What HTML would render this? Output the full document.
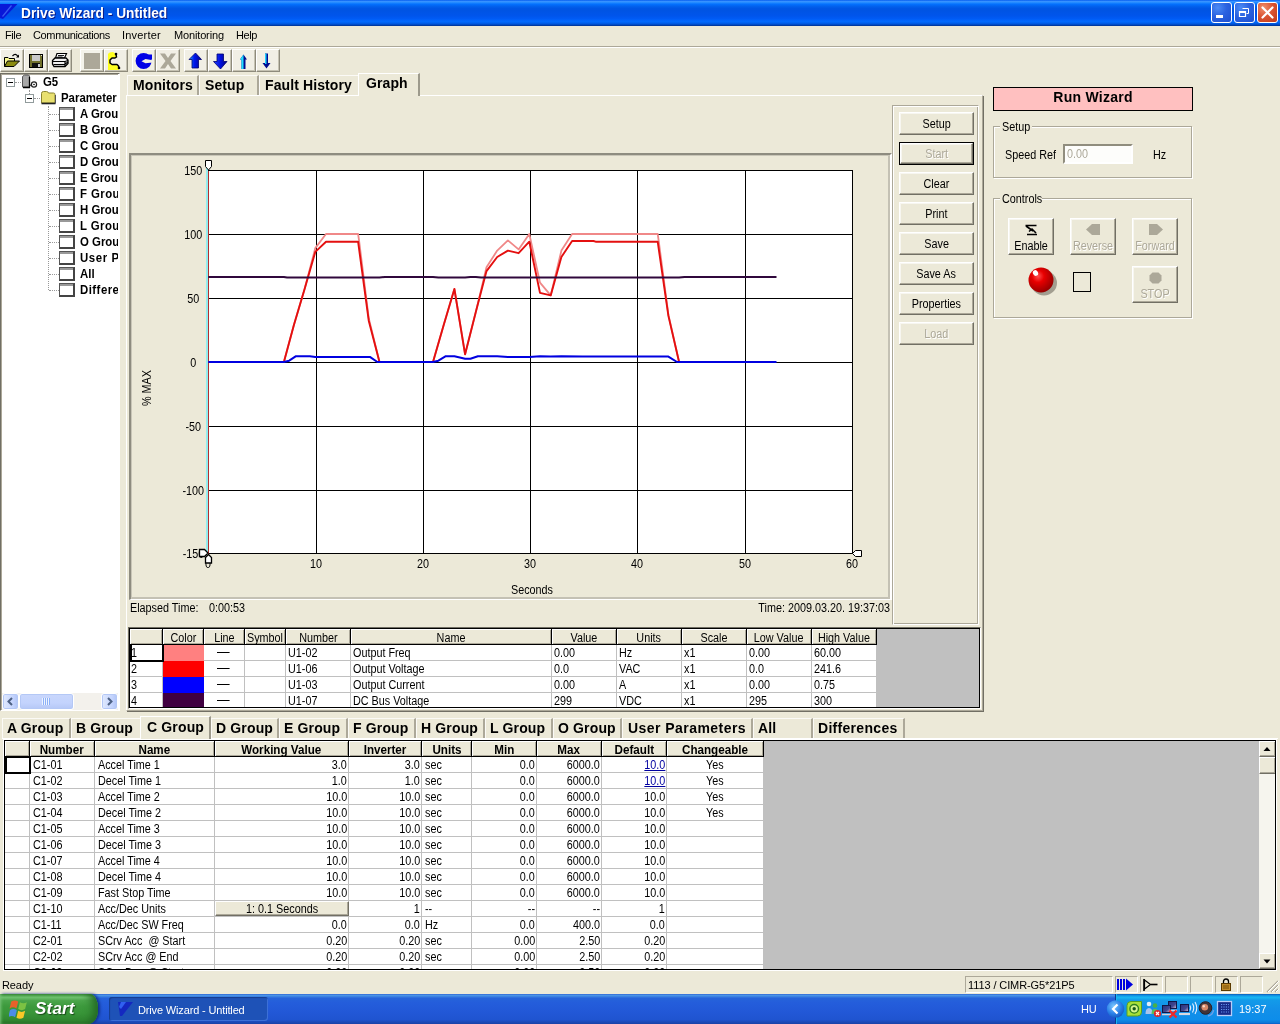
<!DOCTYPE html>
<html>
<head>
<meta charset="utf-8">
<title>Drive Wizard - Untitled</title>
<style>
html,body{margin:0;padding:0}
body{will-change:transform;width:1280px;height:1024px;position:relative;overflow:hidden;background:#ECE9D8;font:11px "Liberation Sans",sans-serif;color:#000}
.a{position:absolute;box-sizing:border-box}
.t{position:absolute;white-space:nowrap;line-height:1;letter-spacing:-.2px}
.b{font-weight:bold}
.m{font-size:12px;letter-spacing:0;transform:scaleX(.9);transform-origin:0 0}
.mr{transform-origin:100% 0}
.mc{transform-origin:50% 0}
.s{display:inline-block;transform:scaleX(.9);transform-origin:0 50%}
.sr{transform-origin:100% 50%}
.sc{transform-origin:50% 50%}
.sb{transform:scaleX(.97)}
#title{left:0;top:0;width:1280px;height:26px;background:linear-gradient(to bottom,#0058EE 0%,#3A93FF 5%,#288EFF 9%,#127DFF 13%,#036FFC 17%,#0262EE 24%,#0057E5 32%,#0054E3 40%,#0055EB 60%,#005BF5 72%,#026AFE 82%,#0062EF 88%,#0052D6 93%,#0040AB 97%,#003092 100%)}
.cb{top:2px;width:21px;height:21px;border:1px solid #fff;border-radius:3px;background:radial-gradient(circle at 30% 25%,#4B8BF5 0%,#2B62E0 45%,#1D4FD0 100%)}
.btn{border:1px solid;border-color:#fff #716F64 #716F64 #fff;box-shadow:inset -1px -1px 0 #ACA899,inset 1px 1px 0 #F7F6F0;background:#ECE9D8;text-align:center;line-height:21px;padding-top:1px;font-size:12px}
.dis{color:#ACA899;text-shadow:1px 1px 0 #fff}
.sunk{border:1px solid;border-color:#ACA899 #fff #fff #ACA899}
.tb{top:49px;width:24px;height:23px;background:#F1EFE5;border:1px solid;border-color:#fff #8E8B7C #8E8B7C #fff;box-shadow:inset -1px -1px 0 #C5C2B2}
.tab{position:absolute;box-sizing:border-box;font:bold 14px "Liberation Sans",sans-serif;white-space:nowrap;border-top:1px solid #FBFAF6;border-left:1px solid #FBFAF6;border-right:2px solid #ACA899;line-height:18px;padding-left:5px;letter-spacing:.1px}
.tabs{border:none;background:#ECE9D8;border-top:1px solid #fff;border-left:1px solid #fff;border-right:2px solid #9D9A8C}
.tr{position:absolute;white-space:nowrap;font-weight:bold;font-size:12px;line-height:1;transform:scaleX(.95);transform-origin:0 0}
.hd{position:absolute;box-sizing:border-box;background:#ECE9D8;border-right:1px solid #000;border-bottom:1px solid #000;box-shadow:inset 1px 1px 0 #fff,inset -1px -1px 0 #ACA899;text-align:center;white-space:nowrap;overflow:hidden;font-size:12px}
.c{position:absolute;box-sizing:border-box;white-space:nowrap;overflow:hidden;border-right:1px solid #C0C0C0;border-bottom:1px solid #C0C0C0;background:#fff;font-size:12px}
</style>
</head>
<body>
<div id="title" class="a"></div>
<svg class="a" style="left:0;top:0" width="22" height="26"><polygon points="0,4 17.500,4 3,19 0,18" fill="#0818D8"/><path d="M2.500 16.500l9-11" stroke="#3A5CF0" stroke-width="1.200"/></svg>
<div class="t b" style="left:21px;top:6px;font-size:14px;color:#fff;text-shadow:1px 1px 0 #0A1883;letter-spacing:0;transform:scaleX(.98);transform-origin:0 0">Drive Wizard - Untitled</div>
<div class="a cb" style="left:1211px"><div class="a" style="left:4px;top:12px;width:7px;height:3px;background:#fff"></div></div>
<div class="a cb" style="left:1234px"><svg class="a" style="left:0;top:0" width="19" height="19"><path d="M7.500 5.500h6v5h-2" fill="none" stroke="#fff" stroke-width="1"/><path d="M4.500 8.500h6v5h-6z M4.500 9.500h6" fill="none" stroke="#fff" stroke-width="1.200"/></svg></div>
<div class="a cb" style="left:1257px;background:radial-gradient(circle at 30% 25%,#F0906C 0%,#DB5533 45%,#C03A1A 100%)"><svg class="a" style="left:0;top:0" width="19" height="19"><path d="M4.500 4.500l10 10M14.500 4.500l-10 10" stroke="#fff" stroke-width="2.200" stroke-linecap="round"/></svg></div>

<div class="t" style="left:5px;top:30px;letter-spacing:-0.4px">File</div>
<div class="t" style="left:33px;top:30px;letter-spacing:-0.35px">Communications</div>
<div class="t" style="left:122px;top:30px;letter-spacing:0.2px">Inverter</div>
<div class="t" style="left:174px;top:30px;letter-spacing:-0.15px">Monitoring</div>
<div class="t" style="left:236px;top:30px;letter-spacing:-0.4px">Help</div>
<div class="a" style="left:0;top:46px;width:1280px;height:1px;background:#ACA899"></div><div class="a" style="left:0;top:47px;width:1280px;height:1px;background:#fff"></div>
<div class="a tb" style="left:0px"><svg class="a" style="left:0;top:0" width="21" height="20"><g transform="translate(-1,-50)"><path d="M4.500 66.500v-9h3.500l1 1h5.500v3" fill="#FFFF99" stroke="#000" stroke-width="1"/><path d="M5 58.500h2.500l1 1.500h5.500v1h-7.500l-1.500 3z" fill="#F8F890"/><path d="M4.500 66.500l3-5.500h12l-5.500 5.500z" fill="#8B8B10" stroke="#000" stroke-width="1"/><path d="M12.500 56q3-3.500 5.500 0.500" fill="none" stroke="#000" stroke-width="1.200"/><path d="M16 57.500h3v-3z" fill="#000"/></g></svg></div>
<div class="a tb" style="left:24px"><svg class="a" style="left:0;top:0" width="21" height="20"><g transform="translate(-25,-50)"><rect x="29.500" y="54.500" width="13" height="13" fill="#70702C" stroke="#000" stroke-width="1"/><rect x="32" y="55" width="8" height="6" fill="#C8C8C8"/><rect x="32" y="63" width="8" height="4" fill="#111"/><rect x="38" y="64" width="2" height="3" fill="#C8C8C8"/><rect x="41" y="55" width="1" height="1" fill="#E8E8E8"/></g></svg></div>
<div class="a tb" style="left:48px"><svg class="a" style="left:0;top:0" width="21" height="20"><g transform="translate(-49,-50)"><path d="M55.500 58l1.500-4.500h9.500l-2 4.500z" fill="#fff" stroke="#000" stroke-width="1.200"/><path d="M58 55.500h6M57.500 57h5" stroke="#000" stroke-width=".9"/><path d="M52.500 60.500l2.500-2.500h11l2 2v3.500l-3 3h-11l-1.500-2.500z" fill="#F0F0F0" stroke="#000" stroke-width="1.300"/><path d="M52.500 61.500h12.500l3-1M53.500 64.500h11l3.500-2.500M65 61.500v5" fill="none" stroke="#000" stroke-width="1.200"/></g></svg></div>
<div class="a tb" style="left:80px"><div class="a" style="left:0;top:0;width:21px;height:20px;background:#F4F3EA"></div><div class="a" style="left:3px;top:3px;width:16px;height:16px;background:#ACA899"></div></div>
<div class="a tb" style="left:104px"><svg class="a" style="left:0;top:0" width="21" height="20"><g transform="translate(-105,-50)"><path d="M108 54q1-2 5-2l3 2 .5 3.500-4.500.5-2 2v3l2 1.500h5l2 3.500v2h-11z" fill="#FFFF20"/><path d="M116 54l.5 3-1.500 1h-3l-2 2v3l2 1.500h5l1.500 1.500.5 2" fill="none" stroke="#000" stroke-width="1.500" stroke-linejoin="round"/><circle cx="116" cy="54" r="1.300"/><circle cx="119" cy="68" r="1.300"/></g></svg></div>
<div class="a tb" style="left:132px"><svg class="a" style="left:0;top:0" width="21" height="20"><g transform="translate(-133,-50)"><circle cx="143.600" cy="61" r="8" fill="#0000E6"/><rect x="146" y="54.500" width="6" height="5" fill="#0000E6"/><path d="M141.500 61.200l4-2.200 7 1.200v2.300l-7 .7z" fill="#F1EFE5"/></g></svg></div>
<div class="a tb" style="left:156px"><svg class="a" style="left:0;top:0" width="21" height="20"><g transform="translate(-157,-50)"><path d="M160 53.500h5l3 4.500 3-4.500h5l-5.500 7.500 5.500 7.500h-5l-3-4.500-3 4.500h-5l5.500-7.500z" fill="#ACA899"/></g></svg></div>
<div class="a tb" style="left:184px"><svg class="a" style="left:0;top:0" width="21" height="20"><g transform="translate(-185,-50)"><defs><linearGradient id="gu" x1="0" x2="1"><stop offset="0" stop-color="#20B8FF"/><stop offset=".4" stop-color="#0018F0"/><stop offset="1" stop-color="#000090"/></linearGradient></defs><path d="M195.500 53l6 6.500h-3v8.500h-6.500v-8.500h-3z" fill="url(#gu)" stroke="#000070" stroke-width=".8"/></g></svg></div>
<div class="a tb" style="left:208px"><svg class="a" style="left:0;top:0" width="21" height="20"><g transform="translate(-209,-50)"><defs><linearGradient id="gd" x1="0" x2="1"><stop offset="0" stop-color="#2040FF"/><stop offset=".5" stop-color="#0010E0"/><stop offset="1" stop-color="#000080"/></linearGradient></defs><path d="M220.500 69l6.500-7.500h-3.500v-7.500h-6.500v7.500h-3.500z" fill="url(#gd)" stroke="#000070" stroke-width=".8"/></g></svg></div>
<div class="a tb" style="left:232px"><svg class="a" style="left:0;top:0" width="21" height="20"><g transform="translate(-233,-50)"><path d="M243.500 54.500l3.500 5h-1.500v9.500h-4v-9.500h-1.500z" fill="#000C90"/><path d="M243.500 54.500l-3.500 5h1.500v9.500h2z" fill="#20E0FF"/></g></svg></div>
<div class="a tb" style="left:256px"><svg class="a" style="left:0;top:0" width="21" height="20"><g transform="translate(-257,-50)"><path d="M266.500 68.500l4-5.500h-2.500v-9.500h-3v9.500h-2.500z" fill="#000C90"/><path d="M265 53.500h1.500v10.500h-1.500z" fill="#20D0FF"/></g></svg></div>
<div class="a" style="left:0;top:73px;width:120px;height:638px;border:1px solid;border-color:#716F64 #fff #fff #716F64;background:#fff;overflow:hidden">
<div class="a" style="left:0;top:0;width:118px;height:1px;background:#ACA899"></div><div class="a" style="left:0;top:0;width:1px;height:636px;background:#ACA899"></div>
<div class="a" style="left:5px;top:4px;width:9px;height:9px;border:1px solid #919B9C;background:#fff"><div class="a" style="left:1px;top:3px;width:5px;height:1px;background:#000"></div></div>
<div class="a" style="left:14px;top:8px;width:6px;border-top:1px dotted #999"></div>
<svg class="a" style="left:19px;top:0px" width="20" height="16"><path d="M2.500 2.500l2-1.500h4l1 1v11h-7z" fill="#A8A8A8" stroke="#555" stroke-width="1"/><path d="M3 13.500h7" stroke="#000" stroke-width="1.500"/><path d="M9.500 3v10.500" stroke="#000" stroke-width="1.300"/><path d="M10 11l3 1" stroke="#000" stroke-width="1"/><circle cx="14" cy="10.500" r="2.600" fill="#fff" stroke="#222" stroke-width="1.200"/><circle cx="14" cy="10.500" r=".8" fill="#000"/></svg>
<div class="tr" style="left:42px;top:2px">G5</div>
<div class="a" style="left:28px;top:16px;height:4px;border-left:1px dotted #999"></div>
<div class="a" style="left:24px;top:20px;width:9px;height:9px;border:1px solid #919B9C;background:#fff"><div class="a" style="left:1px;top:3px;width:5px;height:1px;background:#000"></div></div>
<div class="a" style="left:33px;top:24px;width:6px;border-top:1px dotted #999"></div>
<svg class="a" style="left:39px;top:16px" width="17" height="15"><path d="M1.500 3.500q0-2 2-2h3q1.500 0 2 1.500h5q1.500 0 1.500 1.500v8.500h-13.500z" fill="#E8E070" stroke="#8A8430" stroke-width="1"/><path d="M1.500 13.500h14" stroke="#222" stroke-width="1.600"/><path d="M15.500 5v8.500" stroke="#555" stroke-width="1"/></svg>
<div class="tr" style="left:60px;top:18px">Parameter<span style="margin-left:2px">s</span></div>
<div class="a" style="left:47px;top:32px;height:184px;border-left:1px dotted #999"></div>
<div class="a" style="left:48px;top:40px;width:10px;border-top:1px dotted #999"></div>
<div class="a" style="left:58px;top:33px;width:16px;height:14px;border:1px solid #555;border-right:2px solid #444;border-bottom:2px solid #444;background:#fff"><div class="a" style="left:0;top:0;width:13px;height:2px;background:#999"></div></div>
<div class="tr" style="left:79px;top:34px;">A Group</div>
<div class="a" style="left:48px;top:56px;width:10px;border-top:1px dotted #999"></div>
<div class="a" style="left:58px;top:49px;width:16px;height:14px;border:1px solid #555;border-right:2px solid #444;border-bottom:2px solid #444;background:#fff"><div class="a" style="left:0;top:0;width:13px;height:2px;background:#999"></div></div>
<div class="tr" style="left:79px;top:50px;">B Group</div>
<div class="a" style="left:48px;top:72px;width:10px;border-top:1px dotted #999"></div>
<div class="a" style="left:58px;top:65px;width:16px;height:14px;border:1px solid #555;border-right:2px solid #444;border-bottom:2px solid #444;background:#fff"><div class="a" style="left:0;top:0;width:13px;height:2px;background:#999"></div></div>
<div class="tr" style="left:79px;top:66px;">C Group</div>
<div class="a" style="left:48px;top:88px;width:10px;border-top:1px dotted #999"></div>
<div class="a" style="left:58px;top:81px;width:16px;height:14px;border:1px solid #555;border-right:2px solid #444;border-bottom:2px solid #444;background:#fff"><div class="a" style="left:0;top:0;width:13px;height:2px;background:#999"></div></div>
<div class="tr" style="left:79px;top:82px;">D Group</div>
<div class="a" style="left:48px;top:104px;width:10px;border-top:1px dotted #999"></div>
<div class="a" style="left:58px;top:97px;width:16px;height:14px;border:1px solid #555;border-right:2px solid #444;border-bottom:2px solid #444;background:#fff"><div class="a" style="left:0;top:0;width:13px;height:2px;background:#999"></div></div>
<div class="tr" style="left:79px;top:98px;">E Group</div>
<div class="a" style="left:48px;top:120px;width:10px;border-top:1px dotted #999"></div>
<div class="a" style="left:58px;top:113px;width:16px;height:14px;border:1px solid #555;border-right:2px solid #444;border-bottom:2px solid #444;background:#fff"><div class="a" style="left:0;top:0;width:13px;height:2px;background:#999"></div></div>
<div class="tr" style="left:79px;top:114px;letter-spacing:.45px;">F Group</div>
<div class="a" style="left:48px;top:136px;width:10px;border-top:1px dotted #999"></div>
<div class="a" style="left:58px;top:129px;width:16px;height:14px;border:1px solid #555;border-right:2px solid #444;border-bottom:2px solid #444;background:#fff"><div class="a" style="left:0;top:0;width:13px;height:2px;background:#999"></div></div>
<div class="tr" style="left:79px;top:130px;">H Group</div>
<div class="a" style="left:48px;top:152px;width:10px;border-top:1px dotted #999"></div>
<div class="a" style="left:58px;top:145px;width:16px;height:14px;border:1px solid #555;border-right:2px solid #444;border-bottom:2px solid #444;background:#fff"><div class="a" style="left:0;top:0;width:13px;height:2px;background:#999"></div></div>
<div class="tr" style="left:79px;top:146px;letter-spacing:.45px;">L Group</div>
<div class="a" style="left:48px;top:168px;width:10px;border-top:1px dotted #999"></div>
<div class="a" style="left:58px;top:161px;width:16px;height:14px;border:1px solid #555;border-right:2px solid #444;border-bottom:2px solid #444;background:#fff"><div class="a" style="left:0;top:0;width:13px;height:2px;background:#999"></div></div>
<div class="tr" style="left:79px;top:162px;">O Group</div>
<div class="a" style="left:48px;top:184px;width:10px;border-top:1px dotted #999"></div>
<div class="a" style="left:58px;top:177px;width:16px;height:14px;border:1px solid #555;border-right:2px solid #444;border-bottom:2px solid #444;background:#fff"><div class="a" style="left:0;top:0;width:13px;height:2px;background:#999"></div></div>
<div class="tr" style="left:79px;top:178px;letter-spacing:.65px;">User Parameters</div>
<div class="a" style="left:48px;top:200px;width:10px;border-top:1px dotted #999"></div>
<div class="a" style="left:58px;top:193px;width:16px;height:14px;border:1px solid #555;border-right:2px solid #444;border-bottom:2px solid #444;background:#fff"><div class="a" style="left:0;top:0;width:13px;height:2px;background:#999"></div></div>
<div class="tr" style="left:79px;top:194px;">All</div>
<div class="a" style="left:48px;top:216px;width:10px;border-top:1px dotted #999"></div>
<div class="a" style="left:58px;top:209px;width:16px;height:14px;border:1px solid #555;border-right:2px solid #444;border-bottom:2px solid #444;background:#fff"><div class="a" style="left:0;top:0;width:13px;height:2px;background:#999"></div></div>
<div class="tr" style="left:79px;top:210px;letter-spacing:.5px;">Differences</div>
<div class="a" style="left:117px;top:0;width:1px;height:619px;background:#fff"></div>
<div class="a" style="left:1px;top:619px;width:116px;height:17px;background:#F3F1EC"></div>
<div class="a" style="left:1px;top:619px;width:17px;height:17px;border:1px solid #fff;border-radius:3px;background:linear-gradient(to right,#E1EAFE,#C3D3FD 70%,#B0C4F5);box-shadow:inset 0 0 0 1px #B4C8F6"><svg class="a" style="left:0;top:0" width="15" height="15"><path d="M9 4l-3.500 3.500 3.500 3.500" fill="none" stroke="#4D6185" stroke-width="2"/></svg></div>
<div class="a" style="left:100px;top:619px;width:17px;height:17px;border:1px solid #fff;border-radius:3px;background:linear-gradient(to right,#E1EAFE,#C3D3FD 70%,#B0C4F5);box-shadow:inset 0 0 0 1px #B4C8F6"><svg class="a" style="left:0;top:0" width="15" height="15"><path d="M6 4l3.500 3.500-3.500 3.500" fill="none" stroke="#4D6185" stroke-width="2"/></svg></div>
<div class="a" style="left:18px;top:619px;width:55px;height:17px;border:1px solid #fff;border-radius:3px;background:linear-gradient(to bottom,#C9D7FC,#C3D3FD 60%,#B5C7F5);box-shadow:inset 0 0 0 1px #B4C8F6"><div class="a" style="left:22px;top:4px;width:8px;height:7px;background:repeating-linear-gradient(to right,#EEF4FE 0,#EEF4FE 1px,#8CB0F8 1px,#8CB0F8 2px)"></div></div>
</div>
<div class="a" style="left:126px;top:95px;width:857px;height:616px;border:1px solid;border-color:#fff #ACA899 #ACA899 #fff;box-shadow:1px 1px 0 #716F64"></div>
<div class="tab" style="left:127px;top:75px;width:72px;height:20px;">Monitors</div>
<div class="tab" style="left:199px;top:75px;width:60px;height:20px;">Setup</div>
<div class="tab" style="left:259px;top:75px;width:99px;height:20px;border-right:none;">Fault History</div>
<div class="tab tabs" style="left:358px;top:73px;width:62px;height:23px;padding-left:7px;line-height:19px">Graph</div>
<div class="a" style="left:129px;top:153px;width:763px;height:447px;border:2px solid;border-bottom-width:1px;border-color:#8E8C80 #fff #fff #8E8C80;box-shadow:inset 1px 1px 0 #C9C6B8,inset -2px -2px 0 #C4C1B4"></div>
<svg class="a" style="left:0;top:0" width="1280" height="720" font-family="Liberation Sans, sans-serif" font-size="12">
<rect x="208" y="170" width="644" height="384" fill="#fff"/>
<rect x="208" y="170" width="1" height="384" fill="#000"/>
<rect x="316" y="170" width="1" height="384" fill="#000"/>
<rect x="423" y="170" width="1" height="384" fill="#000"/>
<rect x="530" y="170" width="1" height="384" fill="#000"/>
<rect x="637" y="170" width="1" height="384" fill="#000"/>
<rect x="745" y="170" width="1" height="384" fill="#000"/>
<rect x="852" y="170" width="1" height="384" fill="#000"/>
<rect x="208" y="170" width="645" height="1" fill="#000"/>
<rect x="208" y="234" width="645" height="1" fill="#000"/>
<rect x="208" y="298" width="645" height="1" fill="#000"/>
<rect x="208" y="362" width="645" height="1" fill="#000"/>
<rect x="208" y="426" width="645" height="1" fill="#000"/>
<rect x="208" y="490" width="645" height="1" fill="#000"/>
<rect x="208" y="553" width="645" height="1" fill="#000"/>
<rect x="206" y="166" width="2" height="388" fill="#93ECEE"/>
<rect x="208" y="171" width="1" height="383" fill="#B03030"/>
<text transform="translate(193.200,175) scale(.9,1)" text-anchor="middle">150</text>
<text transform="translate(193.200,239) scale(.9,1)" text-anchor="middle">100</text>
<text transform="translate(193.200,303) scale(.9,1)" text-anchor="middle">50</text>
<text transform="translate(193.200,367) scale(.9,1)" text-anchor="middle">0</text>
<text transform="translate(193.200,431) scale(.9,1)" text-anchor="middle">-50</text>
<text transform="translate(193.200,495) scale(.9,1)" text-anchor="middle">-100</text>
<text transform="translate(193.500,558) scale(.9,1)" text-anchor="middle">-150</text>
<text transform="translate(208,568) scale(.9,1)" text-anchor="middle">0</text>
<text transform="translate(316,568) scale(.9,1)" text-anchor="middle">10</text>
<text transform="translate(423,568) scale(.9,1)" text-anchor="middle">20</text>
<text transform="translate(530,568) scale(.9,1)" text-anchor="middle">30</text>
<text transform="translate(637,568) scale(.9,1)" text-anchor="middle">40</text>
<text transform="translate(745,568) scale(.9,1)" text-anchor="middle">50</text>
<text transform="translate(852,568) scale(.9,1)" text-anchor="middle">60</text>
<text transform="translate(532,594) scale(.9,1)" text-anchor="middle">Seconds</text>
<text transform="translate(151,388) rotate(-90) scale(.9,1)" text-anchor="middle">% MAX</text>
<path d="M205.500 160.500h6v6l-3 3.500-3-3.500z" fill="#fff" stroke="#000" stroke-width="1"/>
<path d="M199.500 549.500h5l3.500 3.500-3.500 3.500h-5z" fill="#fff" stroke="#000" stroke-width="1.300"/>
<path d="M208.500 554.500l3 3v5.500h-6v-5.500z" fill="#fff" stroke="#000" stroke-width="1.300"/>
<path d="M861.500 550.500h-6l-3 3 3 3h6z" fill="#fff" stroke="#000" stroke-width="1"/>
<polyline points="283.9,362.0 293.9,324.9 304.6,289.0 315.3,248.1 326.0,234.0 358.1,234.0 359.2,241.7 368.8,318.5 379.5,362.0 433.0,362.0 443.7,324.9 454.4,289.0 465.1,354.3 475.8,312.1 486.5,267.3 497.2,250.6 507.9,240.4 518.6,249.4 529.3,234.0 540.0,282.6 550.7,295.4 561.4,250.6 572.1,234.0 657.7,234.0 658.8,241.7 668.4,314.6 679.1,362.0" fill="none" stroke="#F08888" stroke-width="1.8" stroke-linejoin="round"/>
<polyline points="208.3,362.0 283.9,362.0 293.9,324.9 304.6,289.0 315.3,251.9 326.0,241.7 358.1,241.7 368.8,321.0 379.5,362.0 433.0,362.0 443.7,324.9 454.4,289.0 465.1,354.3 475.8,312.1 486.5,271.1 497.2,257.0 507.9,250.6 518.6,253.2 529.3,241.7 540.0,292.9 550.7,295.4 561.4,257.0 572.1,241.0 593.5,241.0 595.6,241.7 657.7,241.7 668.4,315.9 679.1,362.0" fill="none" stroke="#E41010" stroke-width="1.9" stroke-linejoin="round"/>
<polyline points="208.3,362.0 283.9,362.0 289.2,360.7 296.0,356.2 309.9,356.2 315.3,356.9 369.9,356.9 377.4,362.0 433.0,362.0 438.4,360.7 445.8,356.2 454.4,356.2 459.8,357.5 465.1,358.8 470.4,358.8 477.9,356.2 497.2,356.2 507.9,356.9 518.6,357.1 529.3,356.9 540.0,356.2 550.7,356.6 561.4,356.2 582.8,356.6 668.4,356.6 677.0,362.0 776.5,362.0" fill="none" stroke="#0000E0" stroke-width="2" stroke-linejoin="round"/>
<polyline points="208.3,276.9 283.9,276.9 287.1,277.5 379.5,277.5 384.9,276.9 433.0,276.9 438.4,277.5 465.1,277.5 470.4,276.9 475.8,276.9 481.1,277.5 679.1,277.5 684.5,276.9 776.5,276.9" fill="none" stroke="#30083C" stroke-width="2" stroke-linejoin="round"/>
</svg>
<div class="t m" style="left:130px;top:602px">Elapsed Time:</div><div class="t m" style="left:209px;top:602px">0:00:53</div>
<div class="t m mr" style="left:700px;top:602px;width:190px;text-align:right">Time: 2009.03.20. 19:37:03</div>
<div class="a" style="left:128px;top:627px;width:853px;height:82px;border:1px solid #000;border-color:#716F64 #fff #fff #716F64"></div>
<div class="a" style="left:129px;top:628px;width:851px;height:80px;border:1px solid #000;background:#C0C0C0"></div>
<div class="hd" style="left:130px;top:629px;width:33px;height:16px;line-height:17px;padding-top:1px"><span class="s sc"></span></div>
<div class="hd" style="left:163px;top:629px;width:41px;height:16px;line-height:17px;padding-top:1px"><span class="s sc">Color</span></div>
<div class="hd" style="left:204px;top:629px;width:41px;height:16px;line-height:17px;padding-top:1px"><span class="s sc">Line</span></div>
<div class="hd" style="left:245px;top:629px;width:41px;height:16px;line-height:17px;padding-top:1px"><span class="s sc">Symbol</span></div>
<div class="hd" style="left:286px;top:629px;width:65px;height:16px;line-height:17px;padding-top:1px"><span class="s sc">Number</span></div>
<div class="hd" style="left:351px;top:629px;width:201px;height:16px;line-height:17px;padding-top:1px"><span class="s sc">Name</span></div>
<div class="hd" style="left:552px;top:629px;width:65px;height:16px;line-height:17px;padding-top:1px"><span class="s sc">Value</span></div>
<div class="hd" style="left:617px;top:629px;width:65px;height:16px;line-height:17px;padding-top:1px"><span class="s sc">Units</span></div>
<div class="hd" style="left:682px;top:629px;width:65px;height:16px;line-height:17px;padding-top:1px"><span class="s sc">Scale</span></div>
<div class="hd" style="left:747px;top:629px;width:65px;height:16px;line-height:17px;padding-top:1px"><span class="s sc">Low Value</span></div>
<div class="hd" style="left:812px;top:629px;width:65px;height:16px;line-height:17px;padding-top:1px"><span class="s sc">High Value</span></div>
<div class="c" style="left:130px;top:645px;width:33px;height:16px;line-height:16px;padding-left:2px;padding-left:1px;"><span class="s">1</span></div>
<div class="c" style="left:163px;top:645px;width:41px;height:16px;line-height:16px;padding-left:2px;background:#FF8080;border-color:#FF8080;"><span class="s"></span></div>
<div class="c" style="left:204px;top:645px;width:41px;height:16px;line-height:16px;padding-left:2px;text-align:center;padding-left:0;"><span class="s"><span style="font-size:14px;line-height:12px;display:inline-block;vertical-align:top;margin-top:0">—</span></span></div>
<div class="c" style="left:245px;top:645px;width:41px;height:16px;line-height:16px;padding-left:2px;"><span class="s"></span></div>
<div class="c" style="left:286px;top:645px;width:65px;height:16px;line-height:16px;padding-left:2px;"><span class="s">U1-02</span></div>
<div class="c" style="left:351px;top:645px;width:201px;height:16px;line-height:16px;padding-left:2px;"><span class="s">Output Freq</span></div>
<div class="c" style="left:552px;top:645px;width:65px;height:16px;line-height:16px;padding-left:2px;"><span class="s">0.00</span></div>
<div class="c" style="left:617px;top:645px;width:65px;height:16px;line-height:16px;padding-left:2px;"><span class="s">Hz</span></div>
<div class="c" style="left:682px;top:645px;width:65px;height:16px;line-height:16px;padding-left:2px;"><span class="s">x1</span></div>
<div class="c" style="left:747px;top:645px;width:65px;height:16px;line-height:16px;padding-left:2px;"><span class="s">0.00</span></div>
<div class="c" style="left:812px;top:645px;width:65px;height:16px;line-height:16px;padding-left:2px;"><span class="s">60.00</span></div>
<div class="c" style="left:130px;top:661px;width:33px;height:16px;line-height:16px;padding-left:2px;padding-left:1px;"><span class="s">2</span></div>
<div class="c" style="left:163px;top:661px;width:41px;height:16px;line-height:16px;padding-left:2px;background:#FF0000;border-color:#FF0000;"><span class="s"></span></div>
<div class="c" style="left:204px;top:661px;width:41px;height:16px;line-height:16px;padding-left:2px;text-align:center;padding-left:0;"><span class="s"><span style="font-size:14px;line-height:12px;display:inline-block;vertical-align:top;margin-top:0">—</span></span></div>
<div class="c" style="left:245px;top:661px;width:41px;height:16px;line-height:16px;padding-left:2px;"><span class="s"></span></div>
<div class="c" style="left:286px;top:661px;width:65px;height:16px;line-height:16px;padding-left:2px;"><span class="s">U1-06</span></div>
<div class="c" style="left:351px;top:661px;width:201px;height:16px;line-height:16px;padding-left:2px;"><span class="s">Output Voltage</span></div>
<div class="c" style="left:552px;top:661px;width:65px;height:16px;line-height:16px;padding-left:2px;"><span class="s">0.0</span></div>
<div class="c" style="left:617px;top:661px;width:65px;height:16px;line-height:16px;padding-left:2px;"><span class="s">VAC</span></div>
<div class="c" style="left:682px;top:661px;width:65px;height:16px;line-height:16px;padding-left:2px;"><span class="s">x1</span></div>
<div class="c" style="left:747px;top:661px;width:65px;height:16px;line-height:16px;padding-left:2px;"><span class="s">0.0</span></div>
<div class="c" style="left:812px;top:661px;width:65px;height:16px;line-height:16px;padding-left:2px;"><span class="s">241.6</span></div>
<div class="c" style="left:130px;top:677px;width:33px;height:16px;line-height:16px;padding-left:2px;padding-left:1px;"><span class="s">3</span></div>
<div class="c" style="left:163px;top:677px;width:41px;height:16px;line-height:16px;padding-left:2px;background:#0000FF;border-color:#0000FF;"><span class="s"></span></div>
<div class="c" style="left:204px;top:677px;width:41px;height:16px;line-height:16px;padding-left:2px;text-align:center;padding-left:0;"><span class="s"><span style="font-size:14px;line-height:12px;display:inline-block;vertical-align:top;margin-top:0">—</span></span></div>
<div class="c" style="left:245px;top:677px;width:41px;height:16px;line-height:16px;padding-left:2px;"><span class="s"></span></div>
<div class="c" style="left:286px;top:677px;width:65px;height:16px;line-height:16px;padding-left:2px;"><span class="s">U1-03</span></div>
<div class="c" style="left:351px;top:677px;width:201px;height:16px;line-height:16px;padding-left:2px;"><span class="s">Output Current</span></div>
<div class="c" style="left:552px;top:677px;width:65px;height:16px;line-height:16px;padding-left:2px;"><span class="s">0.00</span></div>
<div class="c" style="left:617px;top:677px;width:65px;height:16px;line-height:16px;padding-left:2px;"><span class="s">A</span></div>
<div class="c" style="left:682px;top:677px;width:65px;height:16px;line-height:16px;padding-left:2px;"><span class="s">x1</span></div>
<div class="c" style="left:747px;top:677px;width:65px;height:16px;line-height:16px;padding-left:2px;"><span class="s">0.00</span></div>
<div class="c" style="left:812px;top:677px;width:65px;height:16px;line-height:16px;padding-left:2px;"><span class="s">0.75</span></div>
<div class="c" style="left:130px;top:693px;width:33px;height:14px;line-height:16px;padding-left:2px;padding-left:1px;border-bottom:none;"><span class="s">4</span></div>
<div class="c" style="left:163px;top:693px;width:41px;height:14px;line-height:16px;padding-left:2px;background:#400040;border-color:#400040;border-bottom:none;"><span class="s"></span></div>
<div class="c" style="left:204px;top:693px;width:41px;height:14px;line-height:16px;padding-left:2px;text-align:center;padding-left:0;border-bottom:none;"><span class="s"><span style="font-size:14px;line-height:12px;display:inline-block;vertical-align:top;margin-top:0">—</span></span></div>
<div class="c" style="left:245px;top:693px;width:41px;height:14px;line-height:16px;padding-left:2px;border-bottom:none;"><span class="s"></span></div>
<div class="c" style="left:286px;top:693px;width:65px;height:14px;line-height:16px;padding-left:2px;border-bottom:none;"><span class="s">U1-07</span></div>
<div class="c" style="left:351px;top:693px;width:201px;height:14px;line-height:16px;padding-left:2px;border-bottom:none;"><span class="s">DC Bus Voltage</span></div>
<div class="c" style="left:552px;top:693px;width:65px;height:14px;line-height:16px;padding-left:2px;border-bottom:none;"><span class="s">299</span></div>
<div class="c" style="left:617px;top:693px;width:65px;height:14px;line-height:16px;padding-left:2px;border-bottom:none;"><span class="s">VDC</span></div>
<div class="c" style="left:682px;top:693px;width:65px;height:14px;line-height:16px;padding-left:2px;border-bottom:none;"><span class="s">x1</span></div>
<div class="c" style="left:747px;top:693px;width:65px;height:14px;line-height:16px;padding-left:2px;border-bottom:none;"><span class="s">295</span></div>
<div class="c" style="left:812px;top:693px;width:65px;height:14px;line-height:16px;padding-left:2px;border-bottom:none;"><span class="s">300</span></div>
<div class="a" style="left:130px;top:644px;width:34px;height:18px;border:2px solid #000;border-top-width:1px"></div>
<div class="a" style="left:892px;top:105px;width:87px;height:520px;border:1px solid;border-color:#ACA899 #fff #fff #ACA899;box-shadow:inset 1px 1px 0 #fff,inset -1px -1px 0 #ACA899"></div>
<div class="a btn" style="left:899px;top:112px;width:75px;height:23px"><span class="s sc">Setup</span></div>
<div class="a" style="left:899px;top:142px;width:75px;height:23px;border:1px solid #000"></div>
<div class="a btn dis" style="left:900px;top:143px;width:73px;height:21px;line-height:19px"><span class="s sc">Start</span></div>
<div class="a btn" style="left:899px;top:172px;width:75px;height:23px"><span class="s sc">Clear</span></div>
<div class="a btn" style="left:899px;top:202px;width:75px;height:23px"><span class="s sc">Print</span></div>
<div class="a btn" style="left:899px;top:232px;width:75px;height:23px"><span class="s sc">Save</span></div>
<div class="a btn" style="left:899px;top:262px;width:75px;height:23px"><span class="s sc">Save As</span></div>
<div class="a btn" style="left:899px;top:292px;width:75px;height:23px"><span class="s sc">Properties</span></div>
<div class="a btn dis" style="left:899px;top:322px;width:75px;height:23px"><span class="s sc">Load</span></div>
<div class="a b" style="left:993px;top:87px;width:200px;height:24px;border:1px solid #000;background:#FFC0C0;text-align:center;font-size:14px;line-height:18px;letter-spacing:.25px">Run Wizard</div>
<div class="a" style="left:993px;top:126px;width:199px;height:52px;border:1px solid #ACA899;box-shadow:1px 1px 0 #fff,inset 1px 1px 0 #fff"></div>
<div class="a" style="left:1000px;top:121px;width:32px;height:13px;background:#ECE9D8;line-height:13px;padding-left:2px;font-size:12px"><span class="s">Setup</span></div>
<div class="t m" style="left:1005px;top:149px">Speed Ref</div>
<div class="a" style="left:1063px;top:144px;width:70px;height:20px;border:2px solid;border-color:#908D7E #fff #fff #908D7E;background:#FDFDFB;color:#ACA899;line-height:17px;padding-left:2px;font-size:12px"><span class="s">0.00</span></div>
<div class="t m" style="left:1153px;top:149px">Hz</div>
<div class="a" style="left:993px;top:198px;width:199px;height:120px;border:1px solid #ACA899;box-shadow:1px 1px 0 #fff,inset 1px 1px 0 #fff"></div>
<div class="a" style="left:1000px;top:193px;width:42px;height:13px;background:#ECE9D8;line-height:13px;padding-left:2px;font-size:12px"><span class="s">Controls</span></div>
<div class="a btn" style="left:1008px;top:218px;width:46px;height:37px"></div>
<div class="t m mc" style="left:1003px;top:240px;width:56px;text-align:center">Enable</div>
<svg class="a" style="left:1008px;top:218px" width="47" height="22"><path d="M17.500 7.500h11M18 8l7 5M21 13.500l3-2.500 4 4M19 16.500h10" fill="none" stroke="#000" stroke-width="1.600"/></svg>
<div class="a btn" style="left:1070px;top:218px;width:46px;height:37px"></div>
<div class="t m mc dis" style="left:1065px;top:240px;width:56px;text-align:center">Reverse</div>
<svg class="a" style="left:1070px;top:218px" width="47" height="22"><path d="M16 11.500l6-5.500h8v11h-8z" fill="#ACA899"/></svg>
<div class="a btn" style="left:1132px;top:218px;width:46px;height:37px"></div>
<div class="t m mc dis" style="left:1127px;top:240px;width:56px;text-align:center">Forward</div>
<svg class="a" style="left:1132px;top:218px" width="47" height="22"><path d="M31 11.500l-6-5.500h-8v11h8z" fill="#ACA899"/></svg>
<div class="a btn" style="left:1132px;top:266px;width:46px;height:37px"></div>
<div class="t m mc dis" style="left:1127px;top:288px;width:56px;text-align:center">STOP</div>
<svg class="a" style="left:1132px;top:266px" width="47" height="22"><path d="M20.500 6.500h6l3 3v5l-3 3h-6l-3-3v-5z" fill="#ACA899"/></svg>
<svg class="a" style="left:1024px;top:264px" width="36" height="34"><defs><radialGradient id="led" cx=".38" cy=".35" r=".7"><stop offset="0" stop-color="#FF5050"/><stop offset=".35" stop-color="#E80000"/><stop offset="1" stop-color="#900000"/></radialGradient></defs><ellipse cx="20" cy="19" rx="13" ry="12.500" fill="#A29E90"/><circle cx="17" cy="16" r="12.500" fill="url(#led)"/><ellipse cx="11.500" cy="9" rx="2.500" ry="3" fill="#fff" transform="rotate(-30 11.500 9)"/></svg>
<div class="a" style="left:1073px;top:272px;width:18px;height:20px;border:1px solid #000"></div>
<div class="tab" style="left:2px;top:718px;width:69px;height:20px;padding-left:4px;letter-spacing:.15px;line-height:19px;">A Group</div>
<div class="tab" style="left:71px;top:718px;width:69px;height:20px;padding-left:4px;letter-spacing:.15px;line-height:19px;border-right:none;">B Group</div>
<div class="tab" style="left:211px;top:718px;width:68px;height:20px;padding-left:4px;letter-spacing:.15px;line-height:19px;">D Group</div>
<div class="tab" style="left:279px;top:718px;width:69px;height:20px;padding-left:4px;letter-spacing:.15px;line-height:19px;">E Group</div>
<div class="tab" style="left:348px;top:718px;width:68px;height:20px;padding-left:4px;letter-spacing:.15px;line-height:19px;">F Group</div>
<div class="tab" style="left:416px;top:718px;width:69px;height:20px;padding-left:4px;letter-spacing:.15px;line-height:19px;">H Group</div>
<div class="tab" style="left:485px;top:718px;width:68px;height:20px;padding-left:4px;letter-spacing:.15px;line-height:19px;">L Group</div>
<div class="tab" style="left:553px;top:718px;width:69px;height:20px;padding-left:4px;letter-spacing:.15px;line-height:19px;">O Group</div>
<div class="tab" style="left:622px;top:718px;width:131px;height:20px;padding-left:5px;letter-spacing:.45px;line-height:19px;">User Parameters</div>
<div class="tab" style="left:753px;top:718px;width:60px;height:20px;padding-left:4px;letter-spacing:.15px;line-height:19px;">All</div>
<div class="tab" style="left:813px;top:718px;width:92px;height:20px;padding-left:4px;letter-spacing:.3px;line-height:19px;">Differences</div>
<div class="tab tabs" style="left:140px;top:716px;width:71px;height:24px;padding-left:6px;line-height:20px;letter-spacing:.15px">C Group</div>
<div class="a" style="left:2px;top:738px;width:138px;height:1px;background:#fff"></div><div class="a" style="left:211px;top:738px;width:1067px;height:1px;background:#fff"></div>
<div class="a" style="left:3px;top:739px;width:1274px;height:232px;border:1px solid;border-color:#fff #fff #fff #fff"></div>
<div class="a" style="left:4px;top:740px;width:1272px;height:230px;border:1px solid #000;background:#C0C0C0;overflow:hidden">
<div class="hd b" style="left:0px;top:0;width:25px;height:16px;line-height:17px;padding-top:1px"><span class="s sc sb"></span></div>
<div class="hd b" style="left:25px;top:0;width:65px;height:16px;line-height:17px;padding-top:1px"><span class="s sc sb">Number</span></div>
<div class="hd b" style="left:90px;top:0;width:120px;height:16px;line-height:17px;padding-top:1px"><span class="s sc sb">Name</span></div>
<div class="hd b" style="left:210px;top:0;width:134px;height:16px;line-height:17px;padding-top:1px"><span class="s sc sb">Working Value</span></div>
<div class="hd b" style="left:344px;top:0;width:73px;height:16px;line-height:17px;padding-top:1px"><span class="s sc sb">Inverter</span></div>
<div class="hd b" style="left:417px;top:0;width:50px;height:16px;line-height:17px;padding-top:1px"><span class="s sc sb">Units</span></div>
<div class="hd b" style="left:467px;top:0;width:65px;height:16px;line-height:17px;padding-top:1px"><span class="s sc sb">Min</span></div>
<div class="hd b" style="left:532px;top:0;width:65px;height:16px;line-height:17px;padding-top:1px"><span class="s sc sb">Max</span></div>
<div class="hd b" style="left:597px;top:0;width:65px;height:16px;line-height:17px;padding-top:1px"><span class="s sc sb">Default</span></div>
<div class="hd b" style="left:662px;top:0;width:97px;height:16px;line-height:17px;padding-top:1px"><span class="s sc sb">Changeable</span></div>
<div class="c" style="left:0px;top:16px;width:25px;height:16px;line-height:16px;padding-left:2.500px;"><span class="s"></span></div>
<div class="c" style="left:25px;top:16px;width:65px;height:16px;line-height:16px;padding-left:2.500px;"><span class="s">C1-01</span></div>
<div class="c" style="left:90px;top:16px;width:120px;height:16px;line-height:16px;padding-left:2.500px;"><span class="s">Accel Time 1</span></div>
<div class="c" style="left:210px;top:16px;width:134px;height:16px;line-height:16px;text-align:right;padding-right:1px;"><span class="s sr">3.0</span></div>
<div class="c" style="left:344px;top:16px;width:73px;height:16px;line-height:16px;text-align:right;padding-right:1px;"><span class="s sr">3.0</span></div>
<div class="c" style="left:417px;top:16px;width:50px;height:16px;line-height:16px;padding-left:2.500px;"><span class="s">sec</span></div>
<div class="c" style="left:467px;top:16px;width:65px;height:16px;line-height:16px;text-align:right;padding-right:1px;"><span class="s sr">0.0</span></div>
<div class="c" style="left:532px;top:16px;width:65px;height:16px;line-height:16px;text-align:right;padding-right:1px;"><span class="s sr">6000.0</span></div>
<div class="c" style="left:597px;top:16px;width:65px;height:16px;line-height:16px;text-align:right;padding-right:1px;"><span class="s sr"><span style="color:#0000A0;text-decoration:underline">10.0</span></span></div>
<div class="c" style="left:662px;top:16px;width:97px;height:16px;line-height:16px;text-align:center;"><span class="s sc">Yes</span></div>
<div class="c" style="left:0px;top:32px;width:25px;height:16px;line-height:16px;padding-left:2.500px;"><span class="s"></span></div>
<div class="c" style="left:25px;top:32px;width:65px;height:16px;line-height:16px;padding-left:2.500px;"><span class="s">C1-02</span></div>
<div class="c" style="left:90px;top:32px;width:120px;height:16px;line-height:16px;padding-left:2.500px;"><span class="s">Decel Time 1</span></div>
<div class="c" style="left:210px;top:32px;width:134px;height:16px;line-height:16px;text-align:right;padding-right:1px;"><span class="s sr">1.0</span></div>
<div class="c" style="left:344px;top:32px;width:73px;height:16px;line-height:16px;text-align:right;padding-right:1px;"><span class="s sr">1.0</span></div>
<div class="c" style="left:417px;top:32px;width:50px;height:16px;line-height:16px;padding-left:2.500px;"><span class="s">sec</span></div>
<div class="c" style="left:467px;top:32px;width:65px;height:16px;line-height:16px;text-align:right;padding-right:1px;"><span class="s sr">0.0</span></div>
<div class="c" style="left:532px;top:32px;width:65px;height:16px;line-height:16px;text-align:right;padding-right:1px;"><span class="s sr">6000.0</span></div>
<div class="c" style="left:597px;top:32px;width:65px;height:16px;line-height:16px;text-align:right;padding-right:1px;"><span class="s sr"><span style="color:#0000A0;text-decoration:underline">10.0</span></span></div>
<div class="c" style="left:662px;top:32px;width:97px;height:16px;line-height:16px;text-align:center;"><span class="s sc">Yes</span></div>
<div class="c" style="left:0px;top:48px;width:25px;height:16px;line-height:16px;padding-left:2.500px;"><span class="s"></span></div>
<div class="c" style="left:25px;top:48px;width:65px;height:16px;line-height:16px;padding-left:2.500px;"><span class="s">C1-03</span></div>
<div class="c" style="left:90px;top:48px;width:120px;height:16px;line-height:16px;padding-left:2.500px;"><span class="s">Accel Time 2</span></div>
<div class="c" style="left:210px;top:48px;width:134px;height:16px;line-height:16px;text-align:right;padding-right:1px;"><span class="s sr">10.0</span></div>
<div class="c" style="left:344px;top:48px;width:73px;height:16px;line-height:16px;text-align:right;padding-right:1px;"><span class="s sr">10.0</span></div>
<div class="c" style="left:417px;top:48px;width:50px;height:16px;line-height:16px;padding-left:2.500px;"><span class="s">sec</span></div>
<div class="c" style="left:467px;top:48px;width:65px;height:16px;line-height:16px;text-align:right;padding-right:1px;"><span class="s sr">0.0</span></div>
<div class="c" style="left:532px;top:48px;width:65px;height:16px;line-height:16px;text-align:right;padding-right:1px;"><span class="s sr">6000.0</span></div>
<div class="c" style="left:597px;top:48px;width:65px;height:16px;line-height:16px;text-align:right;padding-right:1px;"><span class="s sr">10.0</span></div>
<div class="c" style="left:662px;top:48px;width:97px;height:16px;line-height:16px;text-align:center;"><span class="s sc">Yes</span></div>
<div class="c" style="left:0px;top:64px;width:25px;height:16px;line-height:16px;padding-left:2.500px;"><span class="s"></span></div>
<div class="c" style="left:25px;top:64px;width:65px;height:16px;line-height:16px;padding-left:2.500px;"><span class="s">C1-04</span></div>
<div class="c" style="left:90px;top:64px;width:120px;height:16px;line-height:16px;padding-left:2.500px;"><span class="s">Decel Time 2</span></div>
<div class="c" style="left:210px;top:64px;width:134px;height:16px;line-height:16px;text-align:right;padding-right:1px;"><span class="s sr">10.0</span></div>
<div class="c" style="left:344px;top:64px;width:73px;height:16px;line-height:16px;text-align:right;padding-right:1px;"><span class="s sr">10.0</span></div>
<div class="c" style="left:417px;top:64px;width:50px;height:16px;line-height:16px;padding-left:2.500px;"><span class="s">sec</span></div>
<div class="c" style="left:467px;top:64px;width:65px;height:16px;line-height:16px;text-align:right;padding-right:1px;"><span class="s sr">0.0</span></div>
<div class="c" style="left:532px;top:64px;width:65px;height:16px;line-height:16px;text-align:right;padding-right:1px;"><span class="s sr">6000.0</span></div>
<div class="c" style="left:597px;top:64px;width:65px;height:16px;line-height:16px;text-align:right;padding-right:1px;"><span class="s sr">10.0</span></div>
<div class="c" style="left:662px;top:64px;width:97px;height:16px;line-height:16px;text-align:center;"><span class="s sc">Yes</span></div>
<div class="c" style="left:0px;top:80px;width:25px;height:16px;line-height:16px;padding-left:2.500px;"><span class="s"></span></div>
<div class="c" style="left:25px;top:80px;width:65px;height:16px;line-height:16px;padding-left:2.500px;"><span class="s">C1-05</span></div>
<div class="c" style="left:90px;top:80px;width:120px;height:16px;line-height:16px;padding-left:2.500px;"><span class="s">Accel Time 3</span></div>
<div class="c" style="left:210px;top:80px;width:134px;height:16px;line-height:16px;text-align:right;padding-right:1px;"><span class="s sr">10.0</span></div>
<div class="c" style="left:344px;top:80px;width:73px;height:16px;line-height:16px;text-align:right;padding-right:1px;"><span class="s sr">10.0</span></div>
<div class="c" style="left:417px;top:80px;width:50px;height:16px;line-height:16px;padding-left:2.500px;"><span class="s">sec</span></div>
<div class="c" style="left:467px;top:80px;width:65px;height:16px;line-height:16px;text-align:right;padding-right:1px;"><span class="s sr">0.0</span></div>
<div class="c" style="left:532px;top:80px;width:65px;height:16px;line-height:16px;text-align:right;padding-right:1px;"><span class="s sr">6000.0</span></div>
<div class="c" style="left:597px;top:80px;width:65px;height:16px;line-height:16px;text-align:right;padding-right:1px;"><span class="s sr">10.0</span></div>
<div class="c" style="left:662px;top:80px;width:97px;height:16px;line-height:16px;text-align:center;"><span class="s sc"></span></div>
<div class="c" style="left:0px;top:96px;width:25px;height:16px;line-height:16px;padding-left:2.500px;"><span class="s"></span></div>
<div class="c" style="left:25px;top:96px;width:65px;height:16px;line-height:16px;padding-left:2.500px;"><span class="s">C1-06</span></div>
<div class="c" style="left:90px;top:96px;width:120px;height:16px;line-height:16px;padding-left:2.500px;"><span class="s">Decel Time 3</span></div>
<div class="c" style="left:210px;top:96px;width:134px;height:16px;line-height:16px;text-align:right;padding-right:1px;"><span class="s sr">10.0</span></div>
<div class="c" style="left:344px;top:96px;width:73px;height:16px;line-height:16px;text-align:right;padding-right:1px;"><span class="s sr">10.0</span></div>
<div class="c" style="left:417px;top:96px;width:50px;height:16px;line-height:16px;padding-left:2.500px;"><span class="s">sec</span></div>
<div class="c" style="left:467px;top:96px;width:65px;height:16px;line-height:16px;text-align:right;padding-right:1px;"><span class="s sr">0.0</span></div>
<div class="c" style="left:532px;top:96px;width:65px;height:16px;line-height:16px;text-align:right;padding-right:1px;"><span class="s sr">6000.0</span></div>
<div class="c" style="left:597px;top:96px;width:65px;height:16px;line-height:16px;text-align:right;padding-right:1px;"><span class="s sr">10.0</span></div>
<div class="c" style="left:662px;top:96px;width:97px;height:16px;line-height:16px;text-align:center;"><span class="s sc"></span></div>
<div class="c" style="left:0px;top:112px;width:25px;height:16px;line-height:16px;padding-left:2.500px;"><span class="s"></span></div>
<div class="c" style="left:25px;top:112px;width:65px;height:16px;line-height:16px;padding-left:2.500px;"><span class="s">C1-07</span></div>
<div class="c" style="left:90px;top:112px;width:120px;height:16px;line-height:16px;padding-left:2.500px;"><span class="s">Accel Time 4</span></div>
<div class="c" style="left:210px;top:112px;width:134px;height:16px;line-height:16px;text-align:right;padding-right:1px;"><span class="s sr">10.0</span></div>
<div class="c" style="left:344px;top:112px;width:73px;height:16px;line-height:16px;text-align:right;padding-right:1px;"><span class="s sr">10.0</span></div>
<div class="c" style="left:417px;top:112px;width:50px;height:16px;line-height:16px;padding-left:2.500px;"><span class="s">sec</span></div>
<div class="c" style="left:467px;top:112px;width:65px;height:16px;line-height:16px;text-align:right;padding-right:1px;"><span class="s sr">0.0</span></div>
<div class="c" style="left:532px;top:112px;width:65px;height:16px;line-height:16px;text-align:right;padding-right:1px;"><span class="s sr">6000.0</span></div>
<div class="c" style="left:597px;top:112px;width:65px;height:16px;line-height:16px;text-align:right;padding-right:1px;"><span class="s sr">10.0</span></div>
<div class="c" style="left:662px;top:112px;width:97px;height:16px;line-height:16px;text-align:center;"><span class="s sc"></span></div>
<div class="c" style="left:0px;top:128px;width:25px;height:16px;line-height:16px;padding-left:2.500px;"><span class="s"></span></div>
<div class="c" style="left:25px;top:128px;width:65px;height:16px;line-height:16px;padding-left:2.500px;"><span class="s">C1-08</span></div>
<div class="c" style="left:90px;top:128px;width:120px;height:16px;line-height:16px;padding-left:2.500px;"><span class="s">Decel Time 4</span></div>
<div class="c" style="left:210px;top:128px;width:134px;height:16px;line-height:16px;text-align:right;padding-right:1px;"><span class="s sr">10.0</span></div>
<div class="c" style="left:344px;top:128px;width:73px;height:16px;line-height:16px;text-align:right;padding-right:1px;"><span class="s sr">10.0</span></div>
<div class="c" style="left:417px;top:128px;width:50px;height:16px;line-height:16px;padding-left:2.500px;"><span class="s">sec</span></div>
<div class="c" style="left:467px;top:128px;width:65px;height:16px;line-height:16px;text-align:right;padding-right:1px;"><span class="s sr">0.0</span></div>
<div class="c" style="left:532px;top:128px;width:65px;height:16px;line-height:16px;text-align:right;padding-right:1px;"><span class="s sr">6000.0</span></div>
<div class="c" style="left:597px;top:128px;width:65px;height:16px;line-height:16px;text-align:right;padding-right:1px;"><span class="s sr">10.0</span></div>
<div class="c" style="left:662px;top:128px;width:97px;height:16px;line-height:16px;text-align:center;"><span class="s sc"></span></div>
<div class="c" style="left:0px;top:144px;width:25px;height:16px;line-height:16px;padding-left:2.500px;"><span class="s"></span></div>
<div class="c" style="left:25px;top:144px;width:65px;height:16px;line-height:16px;padding-left:2.500px;"><span class="s">C1-09</span></div>
<div class="c" style="left:90px;top:144px;width:120px;height:16px;line-height:16px;padding-left:2.500px;"><span class="s">Fast Stop Time</span></div>
<div class="c" style="left:210px;top:144px;width:134px;height:16px;line-height:16px;text-align:right;padding-right:1px;"><span class="s sr">10.0</span></div>
<div class="c" style="left:344px;top:144px;width:73px;height:16px;line-height:16px;text-align:right;padding-right:1px;"><span class="s sr">10.0</span></div>
<div class="c" style="left:417px;top:144px;width:50px;height:16px;line-height:16px;padding-left:2.500px;"><span class="s">sec</span></div>
<div class="c" style="left:467px;top:144px;width:65px;height:16px;line-height:16px;text-align:right;padding-right:1px;"><span class="s sr">0.0</span></div>
<div class="c" style="left:532px;top:144px;width:65px;height:16px;line-height:16px;text-align:right;padding-right:1px;"><span class="s sr">6000.0</span></div>
<div class="c" style="left:597px;top:144px;width:65px;height:16px;line-height:16px;text-align:right;padding-right:1px;"><span class="s sr">10.0</span></div>
<div class="c" style="left:662px;top:144px;width:97px;height:16px;line-height:16px;text-align:center;"><span class="s sc"></span></div>
<div class="c" style="left:0px;top:160px;width:25px;height:16px;line-height:16px;padding-left:2.500px;"><span class="s"></span></div>
<div class="c" style="left:25px;top:160px;width:65px;height:16px;line-height:16px;padding-left:2.500px;"><span class="s">C1-10</span></div>
<div class="c" style="left:90px;top:160px;width:120px;height:16px;line-height:16px;padding-left:2.500px;"><span class="s">Acc/Dec Units</span></div>
<div class="c" style="left:210px;top:160px;width:134px;height:16px;line-height:16px;text-align:right;padding-right:1px;"></div>
<div class="a" style="left:210px;top:160px;width:134px;height:15px;background:#ECE9D8;border:1px solid;border-color:#fff #716F64 #716F64 #fff;box-shadow:inset -1px -1px 0 #ACA899;text-align:center;line-height:14px;white-space:nowrap;font-size:12px"><span class="s sc">1: 0.1 Seconds</span></div>
<div class="c" style="left:344px;top:160px;width:73px;height:16px;line-height:16px;text-align:right;padding-right:1px;"><span class="s sr">1</span></div>
<div class="c" style="left:417px;top:160px;width:50px;height:16px;line-height:16px;padding-left:2.500px;"><span class="s">--</span></div>
<div class="c" style="left:467px;top:160px;width:65px;height:16px;line-height:16px;text-align:right;padding-right:1px;"><span class="s sr">--</span></div>
<div class="c" style="left:532px;top:160px;width:65px;height:16px;line-height:16px;text-align:right;padding-right:1px;"><span class="s sr">--</span></div>
<div class="c" style="left:597px;top:160px;width:65px;height:16px;line-height:16px;text-align:right;padding-right:1px;"><span class="s sr">1</span></div>
<div class="c" style="left:662px;top:160px;width:97px;height:16px;line-height:16px;text-align:center;"><span class="s sc"></span></div>
<div class="c" style="left:0px;top:176px;width:25px;height:16px;line-height:16px;padding-left:2.500px;"><span class="s"></span></div>
<div class="c" style="left:25px;top:176px;width:65px;height:16px;line-height:16px;padding-left:2.500px;"><span class="s">C1-11</span></div>
<div class="c" style="left:90px;top:176px;width:120px;height:16px;line-height:16px;padding-left:2.500px;"><span class="s">Acc/Dec SW Freq</span></div>
<div class="c" style="left:210px;top:176px;width:134px;height:16px;line-height:16px;text-align:right;padding-right:1px;"><span class="s sr">0.0</span></div>
<div class="c" style="left:344px;top:176px;width:73px;height:16px;line-height:16px;text-align:right;padding-right:1px;"><span class="s sr">0.0</span></div>
<div class="c" style="left:417px;top:176px;width:50px;height:16px;line-height:16px;padding-left:2.500px;"><span class="s">Hz</span></div>
<div class="c" style="left:467px;top:176px;width:65px;height:16px;line-height:16px;text-align:right;padding-right:1px;"><span class="s sr">0.0</span></div>
<div class="c" style="left:532px;top:176px;width:65px;height:16px;line-height:16px;text-align:right;padding-right:1px;"><span class="s sr">400.0</span></div>
<div class="c" style="left:597px;top:176px;width:65px;height:16px;line-height:16px;text-align:right;padding-right:1px;"><span class="s sr">0.0</span></div>
<div class="c" style="left:662px;top:176px;width:97px;height:16px;line-height:16px;text-align:center;"><span class="s sc"></span></div>
<div class="c" style="left:0px;top:192px;width:25px;height:16px;line-height:16px;padding-left:2.500px;"><span class="s"></span></div>
<div class="c" style="left:25px;top:192px;width:65px;height:16px;line-height:16px;padding-left:2.500px;"><span class="s">C2-01</span></div>
<div class="c" style="left:90px;top:192px;width:120px;height:16px;line-height:16px;padding-left:2.500px;"><span class="s">SCrv Acc &nbsp;@ Start</span></div>
<div class="c" style="left:210px;top:192px;width:134px;height:16px;line-height:16px;text-align:right;padding-right:1px;"><span class="s sr">0.20</span></div>
<div class="c" style="left:344px;top:192px;width:73px;height:16px;line-height:16px;text-align:right;padding-right:1px;"><span class="s sr">0.20</span></div>
<div class="c" style="left:417px;top:192px;width:50px;height:16px;line-height:16px;padding-left:2.500px;"><span class="s">sec</span></div>
<div class="c" style="left:467px;top:192px;width:65px;height:16px;line-height:16px;text-align:right;padding-right:1px;"><span class="s sr">0.00</span></div>
<div class="c" style="left:532px;top:192px;width:65px;height:16px;line-height:16px;text-align:right;padding-right:1px;"><span class="s sr">2.50</span></div>
<div class="c" style="left:597px;top:192px;width:65px;height:16px;line-height:16px;text-align:right;padding-right:1px;"><span class="s sr">0.20</span></div>
<div class="c" style="left:662px;top:192px;width:97px;height:16px;line-height:16px;text-align:center;"><span class="s sc"></span></div>
<div class="c" style="left:0px;top:208px;width:25px;height:16px;line-height:16px;padding-left:2.500px;"><span class="s"></span></div>
<div class="c" style="left:25px;top:208px;width:65px;height:16px;line-height:16px;padding-left:2.500px;"><span class="s">C2-02</span></div>
<div class="c" style="left:90px;top:208px;width:120px;height:16px;line-height:16px;padding-left:2.500px;"><span class="s">SCrv Acc @ End</span></div>
<div class="c" style="left:210px;top:208px;width:134px;height:16px;line-height:16px;text-align:right;padding-right:1px;"><span class="s sr">0.20</span></div>
<div class="c" style="left:344px;top:208px;width:73px;height:16px;line-height:16px;text-align:right;padding-right:1px;"><span class="s sr">0.20</span></div>
<div class="c" style="left:417px;top:208px;width:50px;height:16px;line-height:16px;padding-left:2.500px;"><span class="s">sec</span></div>
<div class="c" style="left:467px;top:208px;width:65px;height:16px;line-height:16px;text-align:right;padding-right:1px;"><span class="s sr">0.00</span></div>
<div class="c" style="left:532px;top:208px;width:65px;height:16px;line-height:16px;text-align:right;padding-right:1px;"><span class="s sr">2.50</span></div>
<div class="c" style="left:597px;top:208px;width:65px;height:16px;line-height:16px;text-align:right;padding-right:1px;"><span class="s sr">0.20</span></div>
<div class="c" style="left:662px;top:208px;width:97px;height:16px;line-height:16px;text-align:center;"><span class="s sc"></span></div>
<div class="c" style="left:0px;top:224px;width:25px;height:16px;line-height:16px;padding-left:2.500px;"><span class="s"></span></div>
<div class="c" style="left:25px;top:224px;width:65px;height:16px;line-height:16px;padding-left:2.500px;"><span class="s">C2-03</span></div>
<div class="c" style="left:90px;top:224px;width:120px;height:16px;line-height:16px;padding-left:2.500px;"><span class="s">SCrv Dec @ Start</span></div>
<div class="c" style="left:210px;top:224px;width:134px;height:16px;line-height:16px;text-align:right;padding-right:1px;"><span class="s sr">0.20</span></div>
<div class="c" style="left:344px;top:224px;width:73px;height:16px;line-height:16px;text-align:right;padding-right:1px;"><span class="s sr">0.20</span></div>
<div class="c" style="left:417px;top:224px;width:50px;height:16px;line-height:16px;padding-left:2.500px;"><span class="s">sec</span></div>
<div class="c" style="left:467px;top:224px;width:65px;height:16px;line-height:16px;text-align:right;padding-right:1px;"><span class="s sr">0.00</span></div>
<div class="c" style="left:532px;top:224px;width:65px;height:16px;line-height:16px;text-align:right;padding-right:1px;"><span class="s sr">2.50</span></div>
<div class="c" style="left:597px;top:224px;width:65px;height:16px;line-height:16px;text-align:right;padding-right:1px;"><span class="s sr">0.20</span></div>
<div class="c" style="left:662px;top:224px;width:97px;height:16px;line-height:16px;text-align:center;"><span class="s sc"></span></div>
<div class="a" style="left:0;top:15px;width:26px;height:18px;border:2px solid #000"></div>
<div class="a" style="left:1254px;top:0;width:17px;height:228px;background:#F6F5EE"></div>
<div class="a" style="left:1254px;top:0px;width:17px;height:16px;background:#ECE9D8;border:1px solid;border-color:#fff #716F64 #716F64 #fff;box-shadow:inset -1px -1px 0 #ACA899"><svg class="a" style="left:0;top:0" width="15" height="15"><path d="M3.500 9h7l-3.500-4z" fill="#000"/></svg></div>
<div class="a" style="left:1254px;top:16px;width:17px;height:17px;background:#ECE9D8;border:1px solid;border-color:#fff #716F64 #716F64 #fff;box-shadow:inset -1px -1px 0 #ACA899"></div>
<div class="a" style="left:1254px;top:212px;width:17px;height:16px;background:#ECE9D8;border:1px solid;border-color:#fff #716F64 #716F64 #fff;box-shadow:inset -1px -1px 0 #ACA899"><svg class="a" style="left:0;top:0" width="15" height="15"><path d="M3.500 5.500h7l-3.500 4z" fill="#000"/></svg></div>
</div>
<div class="t" style="left:2px;top:980px;letter-spacing:-.1px">Ready</div>
<div class="a" style="left:965px;top:976px;width:148px;height:17px;border:1px solid;border-color:#ACA899 #fff #fff #ACA899"></div>
<div class="a" style="left:1115px;top:976px;width:23px;height:17px;border:1px solid;border-color:#ACA899 #fff #fff #ACA899"></div>
<div class="a" style="left:1140px;top:976px;width:23px;height:17px;border:1px solid;border-color:#ACA899 #fff #fff #ACA899"></div>
<div class="a" style="left:1165px;top:976px;width:23px;height:17px;border:1px solid;border-color:#ACA899 #fff #fff #ACA899"></div>
<div class="a" style="left:1190px;top:976px;width:23px;height:17px;border:1px solid;border-color:#ACA899 #fff #fff #ACA899"></div>
<div class="a" style="left:1215px;top:976px;width:23px;height:17px;border:1px solid;border-color:#ACA899 #fff #fff #ACA899"></div>
<div class="a" style="left:1240px;top:976px;width:23px;height:17px;border:1px solid;border-color:#ACA899 #fff #fff #ACA899"></div>
<div class="t" style="left:968px;top:980px;letter-spacing:-.1px">1113 / CIMR-G5*21P5</div>
<svg class="a" style="left:1116px;top:977px" width="22" height="15"><path d="M2 2v11M5 2v11M8 2v11" stroke="#0000E0" stroke-width="2"/><path d="M10 1.500l7 6-7 6z" fill="#0000E0"/></svg>
<svg class="a" style="left:1141px;top:977px" width="22" height="15"><path d="M3 2v12" stroke="#000" stroke-width="1.600"/><path d="M3.500 3l6 4.500-6 4.500z" fill="#ECE9D8" stroke="#000" stroke-width="1.200"/><path d="M9.500 7.500h7" stroke="#000" stroke-width="1.600"/></svg>
<svg class="a" style="left:1216px;top:977px" width="22" height="15"><path d="M7.500 7v-2.500q0-2.500 2.500-2.500t2.500 2.500v2.500" fill="none" stroke="#000" stroke-width="1.300"/><rect x="5.500" y="6.500" width="9" height="7" fill="#C08A28" stroke="#5A3A00" stroke-width="1"/><path d="M7 9h6M7 11h6" stroke="#6A4500" stroke-width=".8"/></svg>
<svg class="a" style="left:1265px;top:979px" width="15" height="15"><path d="M13 2l-11 11M13 6l-7 7M13 10l-3 3" stroke="#ACA899" stroke-width="1.300"/><path d="M14 2l-11 11M14 6l-7 7M14 10l-3 3" stroke="#fff" stroke-width="1"/></svg>
<div class="a" style="left:0;top:994px;width:1280px;height:30px;background:linear-gradient(to bottom,#3168D5 0%,#4993E6 5%,#2663DA 14%,#245DDB 30%,#2258D7 60%,#1F54D0 85%,#1941A5 100%)"></div>
<div class="a" style="left:0;top:994px;width:98px;height:30px;border-radius:0 8px 10px 0/0 14px 14px 0;background:linear-gradient(to bottom,#2E7F2E 0%,#5DB45D 7%,#6FC06F 12%,#4BA54B 22%,#3D9A3D 40%,#389438 65%,#308630 88%,#286F28 100%);box-shadow:inset -10px 0 8px -5px #246A24,inset 2px 0 3px -1px #7BC47B,2px 0 3px #12308A"></div>
<svg class="a" style="left:9px;top:997px" width="22" height="22"><g transform="scale(1.15)"><path d="M2 4q3-2 6 0l-1.500 6q-3-2-6 0z" fill="#E8602A"/><path d="M9.500 4.500q3 2 6 0l-1.500 6q-3 2-6 0z" fill="#7CC243"/><path d="M.800 11.500q3-2 6 0l-1.500 6q-3-2-6 0z" fill="#4C8CE8"/><path d="M8 12q3 2 6 0l-1.500 6q-3 2-6 0z" fill="#F8C828"/></g></svg>
<div class="t b" style="left:35px;top:1000px;font-size:17px;font-style:italic;color:#fff;text-shadow:1px 1px 1px #1A4A1A;letter-spacing:.2px">Start</div>
<div class="a" style="left:109px;top:997px;width:159px;height:24px;border-radius:3px;background:#1E52B7;box-shadow:inset 1px 1px 1px #143C90,inset -1px -1px 0 #3C70D8"></div>
<svg class="a" style="left:118px;top:1001px" width="16" height="16"><polygon points="0,1 15,1 4,15 2,15" fill="#1428C0"/><polygon points="3,1 8,1 3,8 1,6" fill="#3060F0"/></svg>
<div class="t" style="left:138px;top:1005px;color:#fff;letter-spacing:-.15px">Drive Wizard - Untitled</div>
<div class="a" style="left:1115px;top:994px;width:165px;height:30px;background:linear-gradient(to bottom,#0C59B9 0%,#139EE9 6%,#18B5F2 12%,#139BE9 20%,#1290E8 50%,#0D8DEA 85%,#0D79D8 95%,#095BC9 100%);border-left:1px solid #0A3A90;box-shadow:inset 1px 0 0 #18B5F2"></div>
<div class="t" style="left:1081px;top:1004px;color:#fff">HU</div>
<div class="t" style="left:1239px;top:1004px;color:#fff;letter-spacing:0">19:37</div>
<svg class="a" style="left:1105px;top:998px" width="130" height="24"><defs><radialGradient id="chev" cx=".4" cy=".35" r=".7"><stop offset="0" stop-color="#7CC8FF"/><stop offset=".6" stop-color="#2A80E8"/><stop offset="1" stop-color="#1458C0"/></radialGradient><linearGradient id="scr" x1="0" y1="0" x2="1" y2="1"><stop offset="0" stop-color="#2A3078"/><stop offset=".6" stop-color="#404890"/><stop offset="1" stop-color="#E8C8D8"/></linearGradient></defs><circle cx="10.500" cy="11" r="8.700" fill="url(#chev)"/><path d="M12.500 6.500l-4.500 4.500 4.500 4.500" fill="none" stroke="#fff" stroke-width="2.200"/><path d="M22 7.500q0-4 4-4h10.500v10.500q0 4-4 4h-10.500z" fill="#A8E038" stroke="#58A020" stroke-width="1"/><circle cx="29.200" cy="10.800" r="4.300" fill="#D4F48C" stroke="#2F8020" stroke-width="1.400"/><circle cx="29.200" cy="10.800" r="1.700" fill="#185818"/><circle cx="44" cy="6" r="2.300" fill="#E0ECF8"/><path d="M40.500 16q0-6 3.500-6t3.500 6z" fill="#A8C4EC"/><circle cx="50" cy="7.500" r="2.300" fill="#48B048"/><path d="M46.500 16q0-5 3.500-5t3.500 5z" fill="#58C058"/><circle cx="52.500" cy="15.500" r="3.600" fill="#E02828"/><path d="M51 14l3 3M54 14l-3 3" stroke="#fff" stroke-width="1.200"/><rect x="63.500" y="3.500" width="8" height="7" fill="url(#scr)" stroke="#101848"/><rect x="57.500" y="7.500" width="8" height="7" fill="url(#scr)" stroke="#101848"/><path d="M57 16.500h9M65 12.500h7" stroke="#D8D0D8" stroke-width="1.500"/><path d="M64.500 12.500l7 7M71.500 12.500l-7 7" stroke="#F02828" stroke-width="2.200"/><rect x="75.500" y="6.500" width="8" height="7" fill="url(#scr)" stroke="#101848"/><path d="M74 16h11" stroke="#D8D8E0" stroke-width="2.200"/><path d="M85 7.500q1.500 2.500 0 5M87.500 5.500q2.500 4.500 0 9M90 4q3.500 6 0 12" fill="none" stroke="#E8F0FF" stroke-width="1.100"/><circle cx="100.500" cy="10" r="6.300" fill="#40343A" stroke="#282028"/><circle cx="99.800" cy="9.300" r="3.300" fill="#D88868"/><circle cx="98.800" cy="8.300" r="1.200" fill="#F8D8C8"/><path d="M103 18q5-1 5.500-6" fill="none" stroke="#6CA0E8" stroke-width="1.500"/><rect x="112.500" y="3.500" width="14" height="14" fill="#182A88" stroke="#B8CCF8" stroke-width="1.300"/><path d="M116 6.500h8M116 9h8M116 11.500h8M116 14h8" stroke="#6C98F0" stroke-width="1" stroke-dasharray="1.200 1.200"/></svg>
</body>
</html>
